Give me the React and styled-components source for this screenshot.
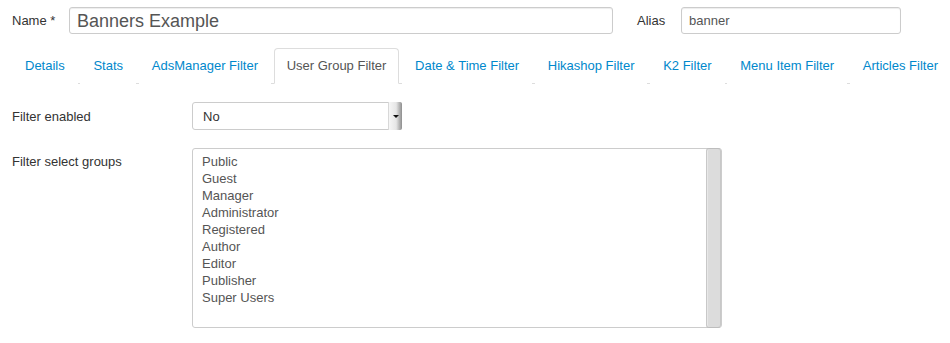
import React from 'react';
import styled, { createGlobalStyle } from 'styled-components';

const GlobalStyle = createGlobalStyle`
  body {
    margin: 0;
    background: #fff;
    font-family: "Liberation Sans", Arial, sans-serif;
    font-size: 13px;
    line-height: 18px;
    color: #333;
  }
`;

const Page = styled.div`
  width: 950px;
  padding: 7px 0 0 12px;
  box-sizing: border-box;
`;

// Title row
const TitleRow = styled.div`
  display: flex;
  align-items: center;
`;

const TitleLabel = styled.label`
  width: ${p => p.$width}px;
  color: #333;
`;

const TextInput = styled.div`
  box-sizing: border-box;
  width: ${p => p.$width}px;
  height: 27px;
  margin-right: ${p => p.$gap || 0}px;
  padding: 0 7px;
  border: 1px solid #ccc;
  border-radius: 3px;
  box-shadow: inset 0 1px 1px rgba(0, 0, 0, 0.075);
  display: flex;
  align-items: center;
  color: #555;
  font-size: ${p => (p.$large ? '18px' : '13px')};
`;

// Tabs
const Tabs = styled.ul`
  display: flex;
  list-style: none;
  margin: 14px 0 0;
  padding: 0;
  border-bottom: 1px solid #ddd;
`;

const Tab = styled.li`
  box-sizing: border-box;
  margin: 0 2.7px -1px 0;
  padding: 8px 12px;
  line-height: 18px;
  border: 1px solid ${p => (p.$active ? '#ddd' : 'transparent')};
  border-bottom-color: ${p => (p.$active ? '#fff' : 'transparent')};
  border-radius: 4px 4px 0 0;
  background: #fff;
  color: ${p => (p.$active ? '#555' : '#0088cc')};
  white-space: nowrap;
`;

// Form
const Form = styled.div`
  display: flex;
  flex-direction: column;
  gap: 18px;
  padding-top: 18px;
`;

const Row = styled.div`
  display: flex;
  align-items: flex-start;
`;

const Label = styled.label`
  width: 180px;
  padding-top: ${p => p.$top || 6}px;
  color: #333;
`;

const Select = styled.div`
  box-sizing: border-box;
  position: relative;
  width: 210px;
  height: 28px;
  padding: 1px 10px 0;
  border: 1px solid #ccc;
  border-radius: 3px;
  display: flex;
  align-items: center;
  color: #333;
`;

const SelectButton = styled.div`
  position: absolute;
  top: -1px;
  right: -1px;
  bottom: -1px;
  width: 13px;
  background: linear-gradient(to right, #f6f6f6 0%, #e6e6e6 55%, #8e8e8e 100%);
  border-left: 1px solid #d8d8d8;
  border-radius: 0 2px 2px 0;
  display: flex;
  align-items: center;
  justify-content: center;

  &::after {
    content: '';
    border-left: 3px solid transparent;
    border-right: 3px solid transparent;
    border-top: 3px solid #111;
  }
`;

const MultiSelect = styled.div`
  box-sizing: border-box;
  position: relative;
  width: 530px;
  height: 180px;
  padding: 4px 9px;
  border: 1px solid #ccc;
  border-radius: 3px;
  color: #555;
`;

const Option = styled.div`
  line-height: 17px;
`;

const Scrollbar = styled.div`
  position: absolute;
  top: -1px;
  right: 0;
  bottom: -1px;
  width: 13px;
  background: #dcdcdc;
  border: 1px solid #c8c8c8;
  border-top-color: #bdbdbd;
  border-bottom-color: #bdbdbd;
  border-radius: 3px;
  box-shadow: inset 1px 0 0 #e8e8e8;
`;

const tabs = [
  'Details',
  'Stats',
  'AdsManager Filter',
  'User Group Filter',
  'Date & Time Filter',
  'Hikashop Filter',
  'K2 Filter',
  'Menu Item Filter',
  'Articles Filter',
];

const groups = [
  'Public',
  'Guest',
  'Manager',
  'Administrator',
  'Registered',
  'Author',
  'Editor',
  'Publisher',
  'Super Users',
];

const App = () => (
  <>
    <GlobalStyle />
    <Page>
      <TitleRow>
        <TitleLabel $width={57}>Name *</TitleLabel>
        <TextInput $width={544} $gap={24} $large>Banners Example</TextInput>
        <TitleLabel $width={44}>Alias</TitleLabel>
        <TextInput $width={220}>banner</TextInput>
      </TitleRow>

      <Tabs>
        {tabs.map(t => (
          <Tab key={t} $active={t === 'User Group Filter'}>{t}</Tab>
        ))}
      </Tabs>

      <Form>
        <Row>
          <Label>Filter enabled</Label>
          <Select>
            No
            <SelectButton />
          </Select>
        </Row>
        <Row>
          <Label $top={5}>Filter select groups</Label>
          <MultiSelect>
            {groups.map(g => (
              <Option key={g}>{g}</Option>
            ))}
            <Scrollbar />
          </MultiSelect>
        </Row>
      </Form>
    </Page>
  </>
);

export default App;
